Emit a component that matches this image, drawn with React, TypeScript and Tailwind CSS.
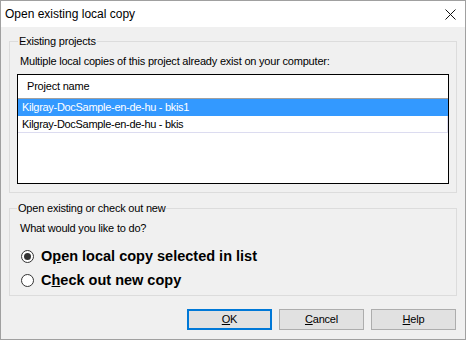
import React, { useState } from 'react';

const ui = "font-['Liberation_Sans',Arial,sans-serif]";

const projects = [
  'Kilgray-DocSample-en-de-hu - bkis1',
  'Kilgray-DocSample-en-de-hu - bkis',
];

function Radio({ checked, children, onClick }: { checked: boolean; children: React.ReactNode; onClick: () => void }) {
  return (
    <div onClick={onClick} className="flex h-[24px] items-center gap-[7px] pl-[11px]">
      <span className="flex h-[13px] w-[13px] items-center justify-center rounded-full border border-[#333] bg-white">
        {checked && <span className="h-[7px] w-[7px] rounded-full bg-[#333]" />}
      </span>
      <span className="text-[14.5px] font-bold leading-[17px] text-black">{children}</span>
    </div>
  );
}

function DlgButton({ children, primary }: { children: React.ReactNode; primary?: boolean }) {
  return (
    <button
      className={
        'flex h-[21px] w-[85px] items-center justify-center bg-[#e1e1e1] text-[11px] text-black ' +
        (primary ? 'border-2 border-[#0078d7]' : 'border border-[#adadad]')
      }
    >
      {children}
    </button>
  );
}

export default function App() {
  const [selected, setSelected] = useState(0);
  const [mode, setMode] = useState<'open' | 'new'>('open');

  return (
    <div className={`flex h-[340px] w-[466px] flex-col border border-[#a0a0a0] bg-[#f0f0f0] ${ui}`}>
      {/* Title bar */}
      <div className="flex h-[26px] shrink-0 items-center justify-between bg-white pl-[4px] pr-[9px]">
        <span className="text-[12px] text-black">Open existing local copy</span>
        <svg width="11" height="11" viewBox="0 0 11 11" className="mt-[1px]">
          <path d="M0.5 0.5 L10.5 10.5 M10.5 0.5 L0.5 10.5" stroke="#111" strokeWidth="1" />
        </svg>
      </div>

      <div className="flex flex-col px-[8px] tracking-[-0.2px]">
        {/* Existing projects */}
        <fieldset className="mt-[8px] border border-[#dcdcdc] px-[7px] pb-[8px] pt-[7px]">
          <legend className="ml-[1px] px-[1px] text-[11px] leading-[13px] text-black">Existing projects</legend>
          <div className="pl-[3px] text-[11px] leading-[13px] text-black">
            Multiple local copies of this project already exist on your computer:
          </div>
          <div className="mt-[6px] h-[110px] border border-black bg-white">
            <div className="flex h-[24px] items-center border-b border-[#a0a0a0] pl-[9px] text-[11px] text-black">
              Project name
            </div>
            {projects.map((p, i) => (
              <div
                key={p}
                onClick={() => setSelected(i)}
                className={
                  'flex h-[17px] items-center pl-[4px] text-[11px] tracking-[-0.3px] ' +
                  (selected === i
                    ? 'bg-[#3399ff] text-white'
                    : 'border-b border-r border-[#dcdcf0] text-black')
                }
              >
                {p}
              </div>
            ))}
          </div>
        </fieldset>

        {/* Open or check out */}
        <fieldset className="mt-[9px] border border-[#dcdcdc] px-0 pb-[3px] pt-[7px]">
          <legend className="ml-[7px] px-[1px] text-[11px] leading-[13px] text-black">Open existing or check out new</legend>
          <div className="pl-[10px] text-[11px] leading-[13px] text-black">What would you like to do?</div>
          <div className="mt-[9px] tracking-normal">
            <Radio checked={mode === 'open'} onClick={() => setMode('open')}>
              O<span className="underline">p</span>en local copy selected in list
            </Radio>
            <Radio checked={mode === 'new'} onClick={() => setMode('new')}>
              C<span className="underline">h</span>eck out new copy
            </Radio>
          </div>
        </fieldset>

        {/* Buttons */}
        <div className="mt-[13px] flex justify-end gap-[7px] pr-[1px]">
          <DlgButton primary>
            <span className="underline">O</span>K
          </DlgButton>
          <DlgButton>
            <span className="underline">C</span>ancel
          </DlgButton>
          <DlgButton>
            <span className="underline">H</span>elp
          </DlgButton>
        </div>
      </div>
    </div>
  );
}
